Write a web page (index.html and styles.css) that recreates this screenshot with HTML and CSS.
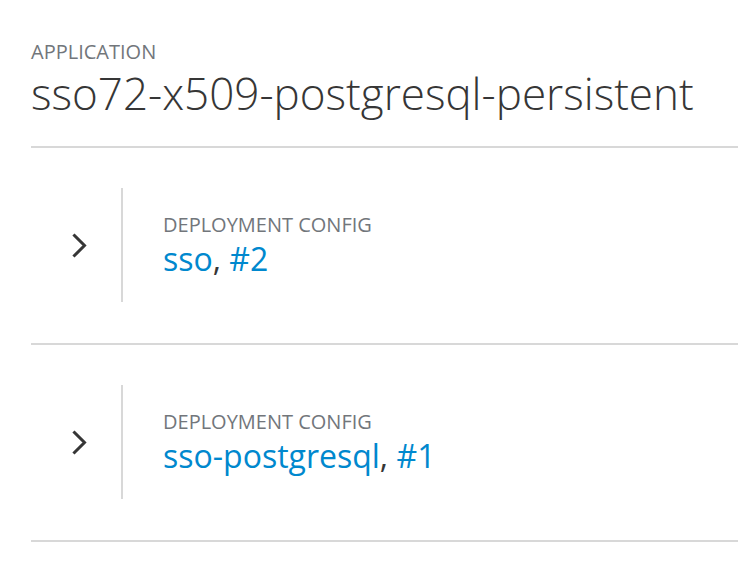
FILE: index.html
```html
<!DOCTYPE html>
<html lang="en">
<head>
<meta charset="utf-8">
<title>Application</title>
<link rel="stylesheet" href="styles.css">
</head>
<body>
<div class="page">
  <header class="app-header">
    <div class="label">APPLICATION</div>
    <h1 class="app-title">sso72-x509-postgresql-persistent</h1>
  </header>
  <div class="rows">
    <div class="row">
      <div class="toggle">
        <svg class="chevron" width="16" height="25" viewBox="0 0 16 25"><polyline points="2.5,2.5 12.5,12.5 2.5,22.5" fill="none" stroke="#363636" stroke-width="3" stroke-linecap="square" stroke-linejoin="miter"/></svg>
      </div>
      <div class="body">
        <div class="label">DEPLOYMENT CONFIG</div>
        <div class="name"><a class="link">sso</a>, <a class="link">#2</a></div>
      </div>
    </div>
    <div class="row">
      <div class="toggle">
        <svg class="chevron" width="16" height="25" viewBox="0 0 16 25"><polyline points="2.5,2.5 12.5,12.5 2.5,22.5" fill="none" stroke="#363636" stroke-width="3" stroke-linecap="square" stroke-linejoin="miter"/></svg>
      </div>
      <div class="body">
        <div class="label">DEPLOYMENT CONFIG</div>
        <div class="name"><a class="link">sso-postgresql</a>, <a class="link">#1</a></div>
      </div>
    </div>
  </div>
</div>
</body>
</html>
```

FILE: styles.css
```css
html, body {
  margin: 0;
  padding: 0;
  background: #ffffff;
}
body {
  font-family: "Open Sans", "Liberation Sans", sans-serif;
  color: #363636;
}
.page {
  padding: 40px 0 0 31px;
}
.app-header {
  border-bottom: 2px solid #d8d8d8;
  padding-bottom: 27px;
}
.label {
  font-size: 20px;
  line-height: 24px;
  color: #72767b;
}
.app-title {
  margin: 3px 0 0;
  font-size: 44px;
  line-height: 52px;
  font-weight: 300;
  color: #363636;
}
.row {
  display: flex;
  align-items: center;
  padding: 40px 0 41px;
  border-bottom: 2px solid #d8d8d8;
}
.toggle {
  width: 90px;
  box-sizing: border-box;
  padding-left: 41px;
  display: flex;
  align-items: center;
}
.chevron {
  display: block;
}
.body {
  border-left: 2px solid #d8d8d8;
  padding: 25px 0 0 40px;
  box-sizing: border-box;
  height: 114px;
  display: flex;
  flex-direction: column;
  justify-content: flex-start;
}
.name {
  font-size: 32px;
  line-height: 44px;
  color: #363636;
}
.link {
  color: #0088ce;
  text-decoration: none;
}
```
